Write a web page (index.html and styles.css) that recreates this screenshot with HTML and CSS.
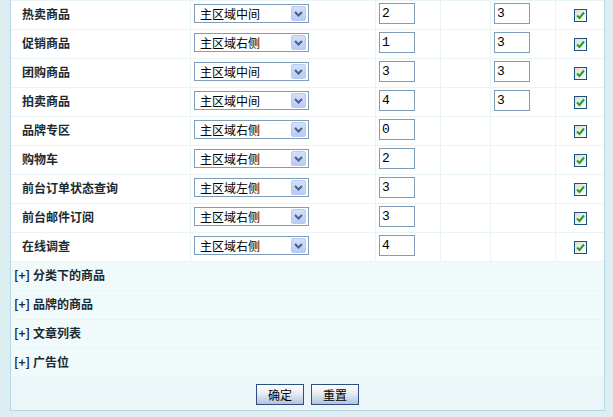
FILE: index.html
```html
<!DOCTYPE html>
<html lang="zh-CN">
<head>
    <meta charset="UTF-8">
    <title>模板区域设置</title>
    <link rel="stylesheet" href="styles.css">
</head>
<body>
    <div class="panel">
        <table class="lib-table">
            <colgroup>
                <col class="c-name">
                <col class="c-region">
                <col class="c-sort">
                <col class="c-blank">
                <col class="c-num">
                <col class="c-check">
            </colgroup>
            <tr>
                <td class="name">热卖商品</td>
                <td><span class="select">主区域中间<span class="arrow"><svg width="9" height="6" viewBox="0 0 9 6"><path d="M1 1l3.5 3.5L8 1" fill="none" stroke="#4d6185" stroke-width="2"/></svg></span></span></td>
                <td><input class="num" type="text" value="2"></td>
                <td></td>
                <td><input class="num" type="text" value="3"></td>
                <td class="ck"><span class="check"><svg width="11" height="11" viewBox="0 0 11 11"><path d="M2 5.5l2.5 2.5L9 2.5" fill="none" stroke="#22a022" stroke-width="2"/></svg></span></td>
            </tr>
            <tr>
                <td class="name">促销商品</td>
                <td><span class="select">主区域右侧<span class="arrow"><svg width="9" height="6" viewBox="0 0 9 6"><path d="M1 1l3.5 3.5L8 1" fill="none" stroke="#4d6185" stroke-width="2"/></svg></span></span></td>
                <td><input class="num" type="text" value="1"></td>
                <td></td>
                <td><input class="num" type="text" value="3"></td>
                <td class="ck"><span class="check"><svg width="11" height="11" viewBox="0 0 11 11"><path d="M2 5.5l2.5 2.5L9 2.5" fill="none" stroke="#22a022" stroke-width="2"/></svg></span></td>
            </tr>
            <tr>
                <td class="name">团购商品</td>
                <td><span class="select">主区域中间<span class="arrow"><svg width="9" height="6" viewBox="0 0 9 6"><path d="M1 1l3.5 3.5L8 1" fill="none" stroke="#4d6185" stroke-width="2"/></svg></span></span></td>
                <td><input class="num" type="text" value="3"></td>
                <td></td>
                <td><input class="num" type="text" value="3"></td>
                <td class="ck"><span class="check"><svg width="11" height="11" viewBox="0 0 11 11"><path d="M2 5.5l2.5 2.5L9 2.5" fill="none" stroke="#22a022" stroke-width="2"/></svg></span></td>
            </tr>
            <tr>
                <td class="name">拍卖商品</td>
                <td><span class="select">主区域中间<span class="arrow"><svg width="9" height="6" viewBox="0 0 9 6"><path d="M1 1l3.5 3.5L8 1" fill="none" stroke="#4d6185" stroke-width="2"/></svg></span></span></td>
                <td><input class="num" type="text" value="4"></td>
                <td></td>
                <td><input class="num" type="text" value="3"></td>
                <td class="ck"><span class="check"><svg width="11" height="11" viewBox="0 0 11 11"><path d="M2 5.5l2.5 2.5L9 2.5" fill="none" stroke="#22a022" stroke-width="2"/></svg></span></td>
            </tr>
            <tr>
                <td class="name">品牌专区</td>
                <td><span class="select">主区域右侧<span class="arrow"><svg width="9" height="6" viewBox="0 0 9 6"><path d="M1 1l3.5 3.5L8 1" fill="none" stroke="#4d6185" stroke-width="2"/></svg></span></span></td>
                <td><input class="num" type="text" value="0"></td>
                <td></td>
                <td></td>
                <td class="ck"><span class="check"><svg width="11" height="11" viewBox="0 0 11 11"><path d="M2 5.5l2.5 2.5L9 2.5" fill="none" stroke="#22a022" stroke-width="2"/></svg></span></td>
            </tr>
            <tr>
                <td class="name">购物车</td>
                <td><span class="select">主区域右侧<span class="arrow"><svg width="9" height="6" viewBox="0 0 9 6"><path d="M1 1l3.5 3.5L8 1" fill="none" stroke="#4d6185" stroke-width="2"/></svg></span></span></td>
                <td><input class="num" type="text" value="2"></td>
                <td></td>
                <td></td>
                <td class="ck"><span class="check"><svg width="11" height="11" viewBox="0 0 11 11"><path d="M2 5.5l2.5 2.5L9 2.5" fill="none" stroke="#22a022" stroke-width="2"/></svg></span></td>
            </tr>
            <tr>
                <td class="name">前台订单状态查询</td>
                <td><span class="select">主区域左侧<span class="arrow"><svg width="9" height="6" viewBox="0 0 9 6"><path d="M1 1l3.5 3.5L8 1" fill="none" stroke="#4d6185" stroke-width="2"/></svg></span></span></td>
                <td><input class="num" type="text" value="3"></td>
                <td></td>
                <td></td>
                <td class="ck"><span class="check"><svg width="11" height="11" viewBox="0 0 11 11"><path d="M2 5.5l2.5 2.5L9 2.5" fill="none" stroke="#22a022" stroke-width="2"/></svg></span></td>
            </tr>
            <tr>
                <td class="name">前台邮件订阅</td>
                <td><span class="select">主区域右侧<span class="arrow"><svg width="9" height="6" viewBox="0 0 9 6"><path d="M1 1l3.5 3.5L8 1" fill="none" stroke="#4d6185" stroke-width="2"/></svg></span></span></td>
                <td><input class="num" type="text" value="3"></td>
                <td></td>
                <td></td>
                <td class="ck"><span class="check"><svg width="11" height="11" viewBox="0 0 11 11"><path d="M2 5.5l2.5 2.5L9 2.5" fill="none" stroke="#22a022" stroke-width="2"/></svg></span></td>
            </tr>
            <tr>
                <td class="name">在线调查</td>
                <td><span class="select">主区域右侧<span class="arrow"><svg width="9" height="6" viewBox="0 0 9 6"><path d="M1 1l3.5 3.5L8 1" fill="none" stroke="#4d6185" stroke-width="2"/></svg></span></span></td>
                <td><input class="num" type="text" value="4"></td>
                <td></td>
                <td></td>
                <td class="ck"><span class="check"><svg width="11" height="11" viewBox="0 0 11 11"><path d="M2 5.5l2.5 2.5L9 2.5" fill="none" stroke="#22a022" stroke-width="2"/></svg></span></td>
            </tr>
            <tr class="group"><td colspan="6">[+] 分类下的商品</td></tr>
            <tr class="group"><td colspan="6">[+] 品牌的商品</td></tr>
            <tr class="group"><td colspan="6">[+] 文章列表</td></tr>
            <tr class="group"><td colspan="6">[+] 广告位</td></tr>
        </table>
        <div class="actions">
            <button class="btn" type="submit">确定</button>
            <button class="btn" type="reset">重置</button>
        </div>
    </div>
</body>
</html>
```

FILE: styles.css
```css
* {
    box-sizing: border-box;
}

body {
    margin: 0;
    background: #ddeef3;
    font-family: "Noto Sans CJK SC", "DejaVu Sans", sans-serif;
    font-size: 12px;
    color: #000;
}

.panel {
    width: 595px;
    margin-left: 10px;
    border: 1px solid #b6d8e4;
    border-top: none;
    background: #ecf6f8;
}

.lib-table {
    width: 593px;
    border-collapse: separate;
    border-spacing: 0;
    border-top: 1px solid #e9f4f6;
    table-layout: fixed;
}

.c-name { width: 180px; }
.c-region { width: 185px; }
.c-sort { width: 65px; }
.c-blank { width: 50px; }
.c-num { width: 65px; }
.c-check { width: 48px; }

.lib-table td {
    height: 29px;
    padding: 0 0 3px 3px;
    background: #fff;
    border-right: 1px solid #e9f4f6;
    border-bottom: 1px solid #e9f4f6;
    vertical-align: middle;
    white-space: nowrap;
}

.lib-table td:last-child {
    border-right: none;
}

.lib-table td.name {
    padding: 0 0 4px 11px;
    font-weight: bold;
    color: #1b2b33;
}

.lib-table td.ck {
    padding: 0 0 4px;
    text-align: center;
}

.lib-table tr.group td {
    padding: 0 0 4px 3px;
    background: #f1fafa;
    font-weight: bold;
    color: #1b2b33;
}

.select {
    display: flex;
    align-items: center;
    justify-content: space-between;
    width: 115px;
    height: 19px;
    padding: 0 2px 0 5px;
    border: 1px solid #7f9db9;
    background: #fff;
    line-height: 17px;
}

.arrow {
    display: flex;
    align-items: center;
    justify-content: center;
    width: 15px;
    height: 15px;
    background: linear-gradient(#d3e0fd, #b8cbf7);
    border: 1px solid #b9cbf0;
    border-radius: 2px;
}

.num {
    display: block;
    width: 36px;
    height: 21px;
    margin: 0;
    padding: 0 2px;
    border: 1px solid #7f9db9;
    font-family: "Liberation Mono", monospace;
    font-size: 13px;
    color: #000;
}

.check {
    display: inline-flex;
    align-items: center;
    justify-content: center;
    width: 13px;
    height: 13px;
    border: 1px solid #1c5180;
    background: linear-gradient(135deg, #dcdcd7, #fff);
    vertical-align: middle;
}

.actions {
    display: flex;
    justify-content: center;
    gap: 7px;
    padding: 6px 0 5px;
}

.btn {
    width: 48px;
    height: 21px;
    padding: 0;
    border: 1px solid #2c4f86;
    background: linear-gradient(#ffffff, #e6ebf4 45%, #b4c2db);
    font-family: "Noto Sans CJK SC", sans-serif;
    font-size: 12px;
    color: #000;
}
```
